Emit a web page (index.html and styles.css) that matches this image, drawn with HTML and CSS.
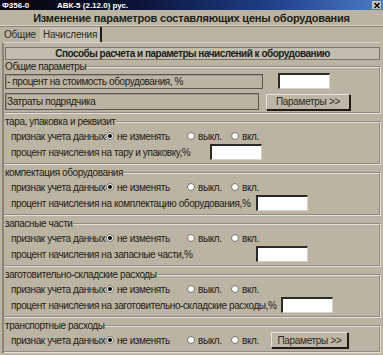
FILE: index.html
```html
<!DOCTYPE html>
<html lang="ru">
<head>
    <meta charset="UTF-8">
    <meta name="viewport" content="width=device-width, initial-scale=1.0">
    <title>АВК-5 (2.12.0) рус.</title>
    <link rel="stylesheet" href="styles.css">
</head>
<body>
    <div class="window">
        <div class="titlebar">
            <span class="title-code">Ф356-0</span>
            <span class="title-app">АВК-5 (2.12.0) рус.</span>
            <span class="close-btn">
                <svg viewBox="0 0 8 7" width="8" height="7"><path d="M1.5 1l5 5M6.5 1l-5 5" stroke="#000" stroke-width="1.4"/></svg>
            </span>
        </div>

        <div class="heading">Изменение параметров составляющих цены оборудования</div>

        <div class="tabs">
            <span class="tab">Общие</span>
            <span class="tab tab-active">Начисления</span>
        </div>

        <div class="panel">
            <div class="section-title">Способы расчета и параметры начислений к оборудованию</div>

            <!-- Общие параметры -->
            <fieldset class="group group-common">
                <legend>Общие параметры</legend>
                <div class="common-row">
                    <div class="static-box box-percent">- процент на стоимость оборудования, %</div>
                    <div class="input input-common"></div>
                </div>
                <div class="common-row common-row-2">
                    <div class="static-box box-contractor">Затраты подрядчика</div>
                    <button class="btn">Параметры &gt;&gt;</button>
                </div>
            </fieldset>

            <fieldset class="group">
                <legend>тара, упаковка и реквизит</legend>
                <div class="radio-row">
                    <span class="radio-label">признак учета данных</span>
                    <span class="radio checked"></span><span class="opt opt-keep">не изменять</span>
                    <span class="radio"></span><span class="opt opt-off">выкл.</span>
                    <span class="radio"></span><span class="opt opt-on">вкл.</span>
                </div>
                <div class="percent-row">
                    <span class="label-tara">процент начисления на тару и упаковку,%</span>
                    <span class="input"></span>
                </div>
            </fieldset>

            <fieldset class="group">
                <legend>компектация оборудования</legend>
                <div class="radio-row">
                    <span class="radio-label">признак учета данных</span>
                    <span class="radio checked"></span><span class="opt opt-keep">не изменять</span>
                    <span class="radio"></span><span class="opt opt-off">выкл.</span>
                    <span class="radio"></span><span class="opt opt-on">вкл.</span>
                </div>
                <div class="percent-row">
                    <span class="label-wide">процент начисления на комплектацию оборудования,%</span>
                    <span class="input"></span>
                </div>
            </fieldset>

            <fieldset class="group">
                <legend>запасные части</legend>
                <div class="radio-row">
                    <span class="radio-label">признак учета данных</span>
                    <span class="radio checked"></span><span class="opt opt-keep">не изменять</span>
                    <span class="radio"></span><span class="opt opt-off">выкл.</span>
                    <span class="radio"></span><span class="opt opt-on">вкл.</span>
                </div>
                <div class="percent-row">
                    <span class="label-wide">процент начисления на запасные части,%</span>
                    <span class="input"></span>
                </div>
            </fieldset>

            <fieldset class="group">
                <legend>заготовительно-складские расходы</legend>
                <div class="radio-row">
                    <span class="radio-label">признак учета данных</span>
                    <span class="radio checked"></span><span class="opt opt-keep">не изменять</span>
                    <span class="radio"></span><span class="opt opt-off">выкл.</span>
                    <span class="radio"></span><span class="opt opt-on">вкл.</span>
                </div>
                <div class="percent-row">
                    <span class="label-widest">процент начисления на заготовительно-складские расходы,%</span>
                    <span class="input"></span>
                </div>
            </fieldset>

            <fieldset class="group">
                <legend>транспортные расходы</legend>
                <div class="radio-row">
                    <span class="radio-label">признак учета данных</span>
                    <span class="radio checked"></span><span class="opt opt-keep">не изменять</span>
                    <span class="radio"></span><span class="opt opt-off">выкл.</span>
                    <span class="radio"></span><span class="opt opt-on">вкл.</span>
                    <button class="btn btn-transport">Параметры &gt;&gt;</button>
                </div>
            </fieldset>
        </div>
    </div>
</body>
</html>
```

FILE: styles.css
```css
/* Окно параметров начислений */
body {
    margin: 0;
    padding: 0;
    background-color: #bcb4a3;
    font-family: "Liberation Sans", Arial, sans-serif;
    font-size: 10px;
    letter-spacing: -0.4px;
    color: #1c1c14;
}

.window {
    width: 383px;
    height: 355px;
    overflow: hidden;
    background-color: #bcb4a3;
}

.titlebar {
    height: 10px;
    display: flex;
    align-items: center;
    padding: 0 2px;
    background: linear-gradient(to right, #060608 0%, #0b1236 35%, #1d3f86 70%, #4d7cc4 100%);
    color: #fff;
    font-size: 8px;
    font-weight: bold;
    letter-spacing: 0;
}

.title-code {
    width: 55px;
}

.title-app {
    flex: 1;
}

.close-btn {
    width: 9px;
    height: 8px;
    background: #c8c2b4;
    display: flex;
    align-items: center;
    justify-content: center;
}

.heading {
    height: 15px;
    line-height: 16px;
    text-align: center;
    font-weight: bold;
    font-size: 11px;
    letter-spacing: -0.2px;
    border-bottom: 1px solid #d8d2c4;
    box-shadow: 0 1px 0 #8c8676;
}

.tabs {
    display: flex;
    height: 15px;
    margin-top: 1px;
    padding-left: 2px;
}

.tab {
    padding: 0 2px;
    line-height: 15px;
    color: #2a2a20;
    letter-spacing: -0.2px;
}

.tab-active {
    background-color: #c6c0b2;
    border-right: 2px solid #1c1c14;
    padding: 0 3px;
    margin-left: 2px;
}

.panel {
    margin: 0 2px;
    border-left: 2px solid #8c8676;
    border-top: 1px solid #d8d2c4;
    padding-top: 4px;
}

.section-title {
    margin: 0 1px;
    height: 11px;
    line-height: 12px;
    text-align: center;
    font-weight: bold;
    font-size: 10px;
    letter-spacing: -0.5px;
    background-color: #c2bcae;
    border: 1px solid #7c7668;
}

.group {
    margin: 3px 0 0 0;
    padding: 0 1px 3px 1px;
    border: 2px groove #e4dfd4;
    border-left: none;
    min-width: 0;
}

.group legend {
    padding: 0;
    margin-left: 0;
    line-height: 10px;
}

.group-common {
    margin-top: 2px;
    padding-bottom: 2px;
}

.common-row {
    display: flex;
    align-items: center;
    height: 16px;
    margin-top: 1px;
}

.common-row-2 {
    height: 17px;
    margin-top: 4px;
}

.static-box {
    height: 13px;
    line-height: 13px;
    padding-left: 1px;
    border: 1px solid #5c584c;
    box-shadow: inset 1px 1px 0 #9e9888;
}

.box-percent {
    width: 255px;
}

.box-contractor {
    width: 251px;
    height: 15px;
    line-height: 15px;
}

.input {
    display: inline-block;
    width: 49px;
    height: 13px;
    background-color: #fff;
    border-top: 2px solid #2c2a24;
    border-left: 2px solid #2c2a24;
    border-right: 1px solid #d8d2c4;
    border-bottom: 1px solid #d8d2c4;
}

.input-common {
    margin-left: 15px;
}

.btn {
    margin-left: 7px;
    width: 84px;
    height: 16px;
    padding: 0;
    font-family: inherit;
    font-size: 10px;
    letter-spacing: -0.3px;
    color: #2a2a20;
    background-color: #bdb6a6;
    border: 1px solid #1c1c14;
    border-top-color: #e8e4da;
    border-left-color: #e8e4da;
    box-shadow: 1px 1px 0 #1c1c14;
}

.radio-row {
    display: flex;
    align-items: center;
    height: 16px;
    margin-top: 1px;
    padding-left: 6px;
}

.radio-label {
    width: 95px;
    flex-shrink: 0;
    white-space: nowrap;
}

.radio {
    width: 6px;
    height: 6px;
    border-radius: 50%;
    background-color: #fff;
    border: 1px solid #77736a;
    position: relative;
    margin-right: 3px;
    flex-shrink: 0;
}

.radio.checked::after {
    content: "";
    position: absolute;
    left: 1px;
    top: 1px;
    width: 4px;
    height: 4px;
    border-radius: 50%;
    background-color: #000;
}

.opt-keep {
    width: 70px;
}

.opt-off {
    width: 33px;
}

.opt-on {
    width: 20px;
}

.btn-transport {
    margin-left: 9px;
    width: 77px;
}

.percent-row {
    display: flex;
    align-items: center;
    height: 16px;
    padding-left: 6px;
}

.label-tara {
    width: 199px;
}

.label-wide {
    width: 245px;
}

.label-widest {
    width: 270px;
}
```
